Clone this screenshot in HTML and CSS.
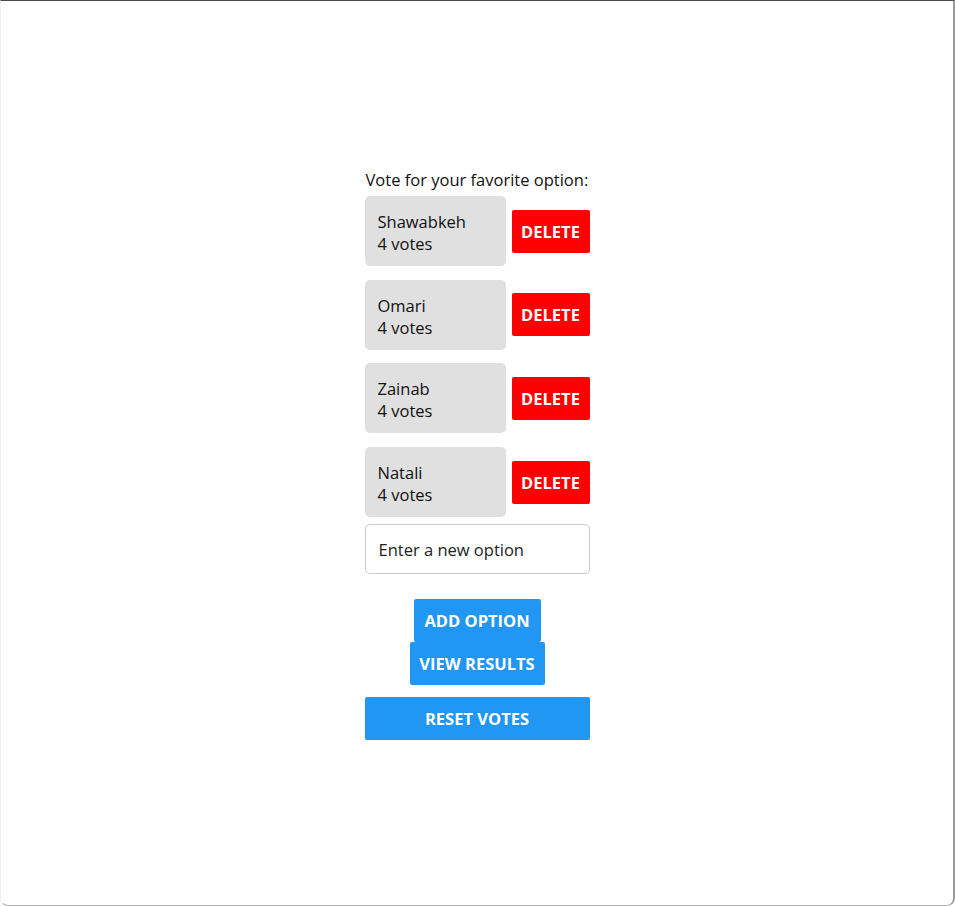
FILE: index.html
```html
<!DOCTYPE html>
<html lang="en">
<head>
<meta charset="utf-8">
<title>Vote</title>
<link rel="stylesheet" href="styles.css">
</head>
<body>
<div class="frame">
  <main class="poll">
    <p class="poll-title">Vote for your favorite option:</p>
    <div class="options">
      <div class="option-row">
        <div class="option-card"><div>Shawabkeh</div><div>4 votes</div></div>
        <button class="btn btn-delete">DELETE</button>
      </div>
      <div class="option-row">
        <div class="option-card"><div>Omari</div><div>4 votes</div></div>
        <button class="btn btn-delete">DELETE</button>
      </div>
      <div class="option-row">
        <div class="option-card"><div>Zainab</div><div>4 votes</div></div>
        <button class="btn btn-delete">DELETE</button>
      </div>
      <div class="option-row">
        <div class="option-card"><div>Natali</div><div>4 votes</div></div>
        <button class="btn btn-delete">DELETE</button>
      </div>
    </div>
    <input class="option-input" type="text" placeholder="Enter a new option">
    <div class="actions">
      <button class="btn btn-blue">ADD OPTION</button>
      <button class="btn btn-blue">VIEW RESULTS</button>
    </div>
    <button class="btn btn-blue btn-wide">RESET VOTES</button>
  </main>
</div>
</body>
</html>
```
FILE: styles.css
```css
* { box-sizing: border-box; }
html, body { margin: 0; padding: 0; background: #fff; }
body {
  font-family: "Open Sans", "Noto Sans", sans-serif;
  font-size: 16.5px;
  color: #111;
}
.frame {
  height: 906px;
  border-top: 1px solid #4a4a4a;
  border-right: 2px solid #9a9a9a;
  border-bottom: 1px solid #b0b0b0;
  border-left: 1px solid #f0f0f0;
  border-radius: 0 0 8px 8px;
  display: flex;
  justify-content: center;
  padding-top: 168px;
}
.poll {
  width: 225px;
  display: flex;
  flex-direction: column;
  align-items: stretch;
}
.poll-title {
  margin: 0 0 5px 1px;
  line-height: 22px;
  white-space: nowrap;
}
.options {
  display: flex;
  flex-direction: column;
  gap: 13.7px;
}
.option-row {
  display: flex;
  align-items: center;
  gap: 6px;
}
.option-card {
  width: 141px;
  height: 70px;
  background: #e0e0e0;
  border-radius: 5px;
  padding: 15px 13px 11px;
  line-height: 22px;
}
.btn {
  font-family: inherit;
  font-weight: 700;
  font-size: 16.5px;
  color: #fff;
  border: none;
  border-radius: 2px;
  height: 43px;
  cursor: pointer;
  white-space: nowrap;
}
.btn-delete {
  width: 78px;
  background: #ff0000;
  padding: 0;
}
.option-input {
  margin-top: 7px;
  height: 50px;
  border: 1px solid #cccccc;
  border-radius: 5px;
  padding: 0 13px;
  font-family: inherit;
  font-size: 16.5px;
  color: #111;
}
.option-input::placeholder { color: #222; opacity: 1; }
.actions {
  margin-top: 25px;
  display: flex;
  flex-direction: column;
  align-items: center;
}
.btn-blue {
  background: #2196f3;
  padding: 0 8px;
}
.actions .btn-blue:first-child { width: 127px; }
.actions .btn-blue:last-child { width: 135px; }
.btn-wide {
  margin-top: 12px;
  width: 225px;
}
```
